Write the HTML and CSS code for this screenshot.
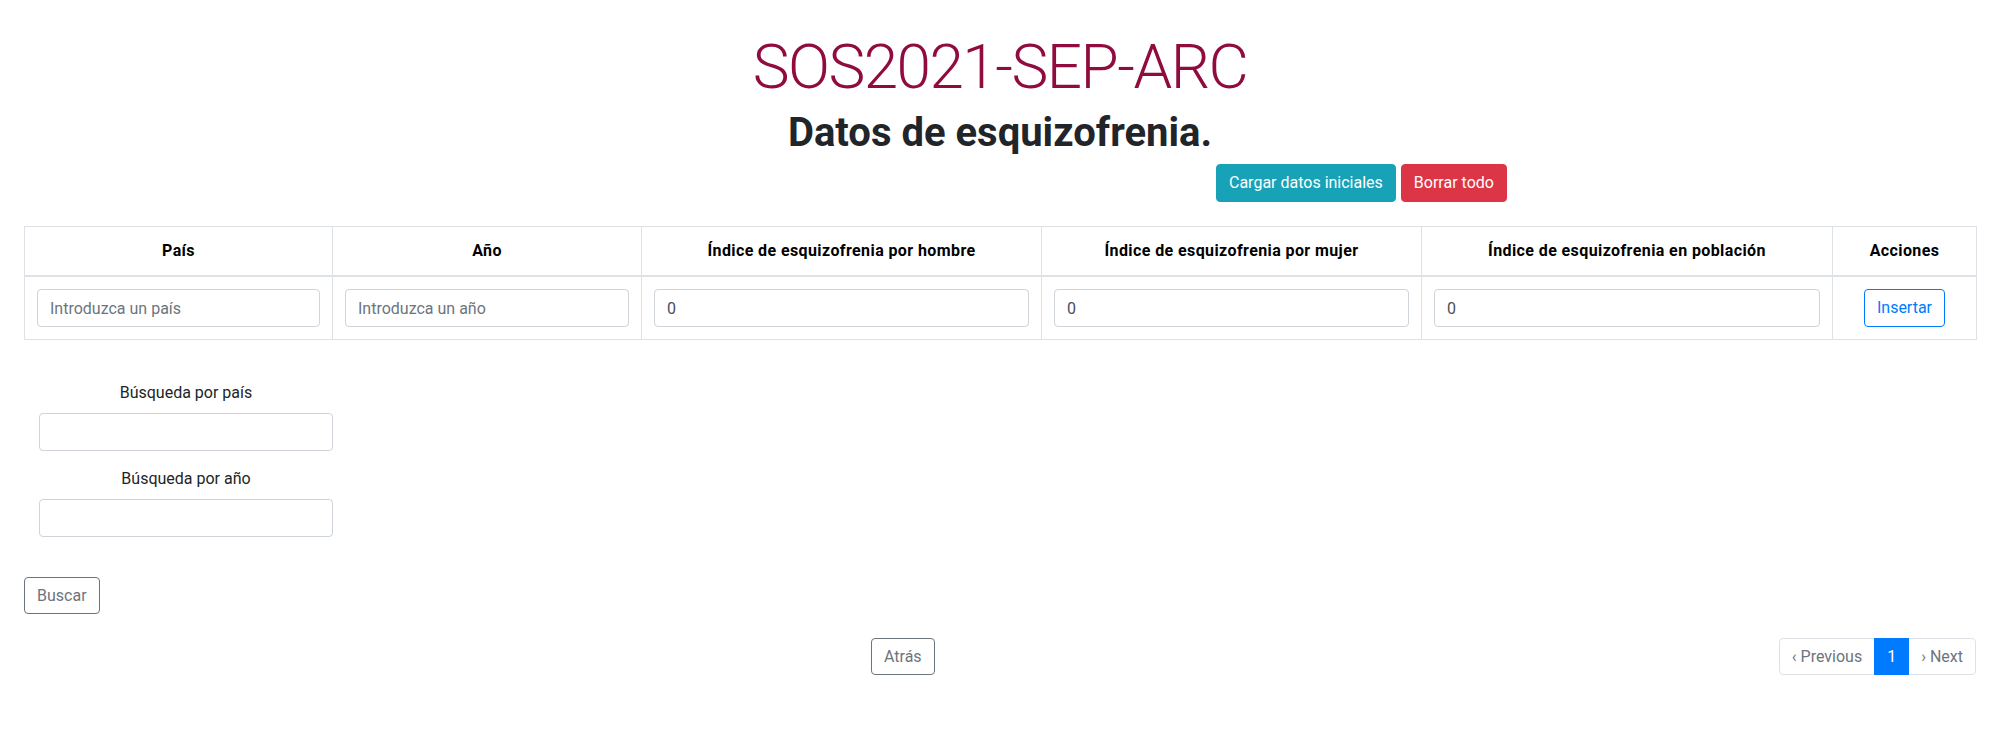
FILE: index.html
```html
<!DOCTYPE html>
<html lang="es">
<head>
<meta charset="utf-8">
<title>SOS2021-SEP-ARC</title>
<link rel="stylesheet" href="styles.css">
</head>
<body>
<main class="page">
  <h1 class="title">SOS2021-SEP-ARC</h1>
  <h2 class="subtitle">Datos de esquizofrenia.</h2>
  <div class="actions">
    <button class="btn btn-info">Cargar datos iniciales</button>
    <button class="btn btn-danger">Borrar todo</button>
  </div>

  <table class="data-table">
    <colgroup>
      <col class="c-pais">
      <col class="c-anio">
      <col class="c-hombre">
      <col class="c-mujer">
      <col class="c-poblacion">
      <col class="c-acciones">
    </colgroup>
    <thead>
      <tr>
        <th>País</th>
        <th>Año</th>
        <th>Índice de esquizofrenia por hombre</th>
        <th>Índice de esquizofrenia por mujer</th>
        <th>Índice de esquizofrenia en población</th>
        <th>Acciones</th>
      </tr>
    </thead>
    <tbody>
      <tr>
        <td><input class="form-control" type="text" placeholder="Introduzca un país"></td>
        <td><input class="form-control" type="text" placeholder="Introduzca un año"></td>
        <td><input class="form-control" type="text" value="0"></td>
        <td><input class="form-control" type="text" value="0"></td>
        <td><input class="form-control" type="text" value="0"></td>
        <td><button class="btn btn-outline-primary">Insertar</button></td>
      </tr>
    </tbody>
  </table>

  <section class="search">
    <div class="form-group">
      <label class="search-label">Búsqueda por país</label>
      <input class="form-control" type="text">
    </div>
    <div class="form-group">
      <label class="search-label">Búsqueda por año</label>
      <input class="form-control" type="text">
    </div>
  </section>
  <button class="btn btn-outline-secondary search-btn">Buscar</button>

  <div class="footer-row">
    <button class="btn btn-outline-secondary">Atrás</button>
    <nav class="pagination">
      <span class="page-link page-first">‹ Previous</span>
      <span class="page-link page-active">1</span>
      <span class="page-link page-last">› Next</span>
    </nav>
  </div>
</main>
</body>
</html>
```

FILE: styles.css
```css
* {
  box-sizing: border-box;
}

body {
  margin: 0;
  background: #fff;
  color: #212529;
  font-family: Roboto, "Noto Sans", "Liberation Sans", sans-serif;
  font-size: 16px;
  line-height: 24px;
}

.page {
  padding: 0 24px;
}

.title {
  margin: 30px 0 0;
  text-align: center;
  font-weight: 300;
  font-size: 62px;
  line-height: 74px;
  letter-spacing: -1.5px;
  color: #900c3f;
}

.subtitle {
  margin: 5px 0 0;
  text-align: center;
  font-weight: 700;
  font-size: 40px;
  line-height: 48px;
}

.actions {
  display: flex;
  gap: 5px;
  margin-top: 7px;
  padding-left: 1192px;
}

.btn {
  display: inline-block;
  font-family: inherit;
  font-size: 16px;
  line-height: 24px;
  padding: 6px 12px;
  border: 1px solid transparent;
  border-radius: 4px;
  background: transparent;
  cursor: pointer;
}

.btn-info {
  background: #17a2b8;
  border-color: #17a2b8;
  color: #fff;
}

.btn-danger {
  background: #dc3545;
  border-color: #dc3545;
  color: #fff;
}

.btn-outline-primary {
  color: #007bff;
  border-color: #007bff;
  background: #fff;
}

.btn-outline-secondary {
  color: #6c757d;
  border-color: #6c757d;
  background: #fff;
}

.data-table {
  margin-top: 24px;
  width: 100%;
  table-layout: fixed;
  border-collapse: collapse;
}

.c-pais { width: 308px; }
.c-anio { width: 309px; }
.c-hombre { width: 400px; }
.c-mujer { width: 380px; }
.c-poblacion { width: 411px; }
.c-acciones { width: 144px; }

.data-table th,
.data-table td {
  padding: 12px;
  border: 1px solid #dee2e6;
  text-align: center;
  vertical-align: middle;
}

.data-table th {
  border-bottom-width: 2px;
  font-weight: 700;
  letter-spacing: 0.4px;
  color: #000;
}

.form-control {
  display: block;
  width: 100%;
  height: 38px;
  padding: 6px 12px;
  font-family: inherit;
  font-size: 16px;
  line-height: 24px;
  color: #495057;
  background: #fff;
  border: 1px solid #ced4da;
  border-radius: 4px;
}

.form-control::placeholder {
  color: #6c757d;
  opacity: 1;
}

.search {
  margin-left: 15px;
  width: 294px;
  padding-top: 41px;
}

.form-group {
  margin-bottom: 16px;
}

.search-label {
  display: block;
  text-align: center;
  margin-bottom: 8px;
}

.search-btn {
  margin-top: 24px;
  height: 37px;
}

.footer-row {
  display: flex;
  align-items: center;
  margin-top: 24px;
  padding-left: 847px;
}

.footer-row .btn {
  height: 37px;
}

.pagination {
  display: flex;
  margin-left: auto;
}

.page-link {
  display: block;
  padding: 6px 12px;
  height: 37px;
  line-height: 24px;
  color: #6c757d;
  background: #fff;
  border: 1px solid #dee2e6;
  margin-left: -1px;
}

.page-first {
  margin-left: 0;
  border-radius: 4px 0 0 4px;
}

.page-last {
  border-radius: 0 4px 4px 0;
}

.page-active {
  color: #fff;
  background: #007bff;
  border-color: #007bff;
  position: relative;
  z-index: 1;
}
```
